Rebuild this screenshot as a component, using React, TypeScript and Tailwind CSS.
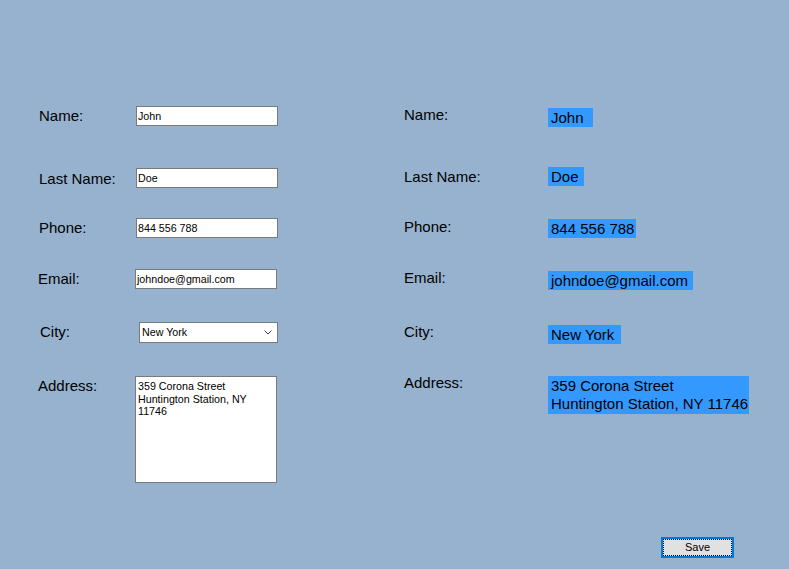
import { ReactNode } from 'react';

// WinForms-style customer form: editable fields on the left, a highlighted preview on the right.

const FONT = { fontFamily: '"Liberation Sans", Arial, sans-serif' };

function Label({ children, className = '' }: { children: ReactNode; className?: string }) {
  return <div className={`self-start text-[15px] leading-[17px] text-black ${className}`}>{children}</div>;
}

function TextBox({ value, className = '' }: { value: string; className?: string }) {
  return (
    <div className={`self-start w-[142px] h-[20px] border border-[#7a7a7a] bg-white px-[1px] text-[10.7px] leading-[18px] text-black whitespace-nowrap overflow-hidden ${className}`}>
      {value}
    </div>
  );
}

function Value({ children, className = '' }: { children: ReactNode; className?: string }) {
  return (
    <div className={`self-start bg-[#3399ff] pl-[3px] pt-px pb-px text-[15px] leading-[17px] text-black whitespace-nowrap ${className}`}>
      {children}
    </div>
  );
}

export default function App() {
  return (
    <div className="w-[789px] h-[569px] bg-[#97b2cf] flex flex-col overflow-hidden" style={FONT}>
      <div className="grid grid-cols-[98px_268px_144px_1fr] grid-rows-[62px_50px_51px_53px_54px_107px] ml-[38px] mt-[106px]">
        {/* Name */}
        <Label className="mt-px ml-px">Name:</Label>
        <TextBox value="John" />
        <Label>Name:</Label>
        <Value className="w-[45px] mt-[2px]">John</Value>

        {/* Last name */}
        <Label className="mt-[2px] ml-px">Last Name:</Label>
        <TextBox value="Doe" />
        <Label>Last Name:</Label>
        <Value className="w-[36px] -mt-px">Doe</Value>

        {/* Phone */}
        <Label className="mt-px ml-px">Phone:</Label>
        <TextBox value="844 556 788" />
        <Label>Phone:</Label>
        <Value className="w-[88px] mt-px">844 556 788</Value>

        {/* Email */}
        <Label className="mt-px">Email:</Label>
        <TextBox value="johndoe@gmail.com" className="-ml-px" />
        <Label>Email:</Label>
        <Value className="w-[145px] mt-[2px]">johndoe@gmail.com</Value>

        {/* City */}
        <Label className="mt-px ml-[2px]">City:</Label>
        <div className="self-start ml-[3px] w-[139px] h-[21px] border border-[#7a7a7a] bg-white flex items-center justify-between pl-[2px] pr-[5px] text-[10.7px] leading-[19px] text-black">
          <span>New York</span>
          <svg width="8" height="5" viewBox="0 0 8 5" fill="none">
            <path d="M0.5 0.5 L4 4 L7.5 0.5" stroke="#404040" strokeWidth="1" />
          </svg>
        </div>
        <Label className="mt-px">City:</Label>
        <Value className="w-[73px] mt-[3px]">New York</Value>

        {/* Address */}
        <Label className="mt-px">Address:</Label>
        <div className="self-start -ml-px w-[142px] h-[107px] border border-[#7a7a7a] bg-white pl-[2px] pt-[3px] text-[10.7px] leading-[12.5px] text-black">
          359 Corona Street<br />Huntington Station, NY<br />11746
        </div>
        <Label className="-mt-[2px]">Address:</Label>
        <Value className="w-[201px] leading-[18px] pt-0 pb-0">
          359 Corona Street<br />Huntington Station, NY 11746
        </Value>
      </div>

      <div className="flex justify-end pr-[55px] mt-[54px]">
        <button className="w-[73px] h-[21px] border-2 border-[#0078d7] bg-[#e1e1e1] p-0">
          <div className="w-full h-full border border-dotted border-black flex items-center justify-center text-[11px] leading-none text-black">
            Save
          </div>
        </button>
      </div>
    </div>
  );
}
